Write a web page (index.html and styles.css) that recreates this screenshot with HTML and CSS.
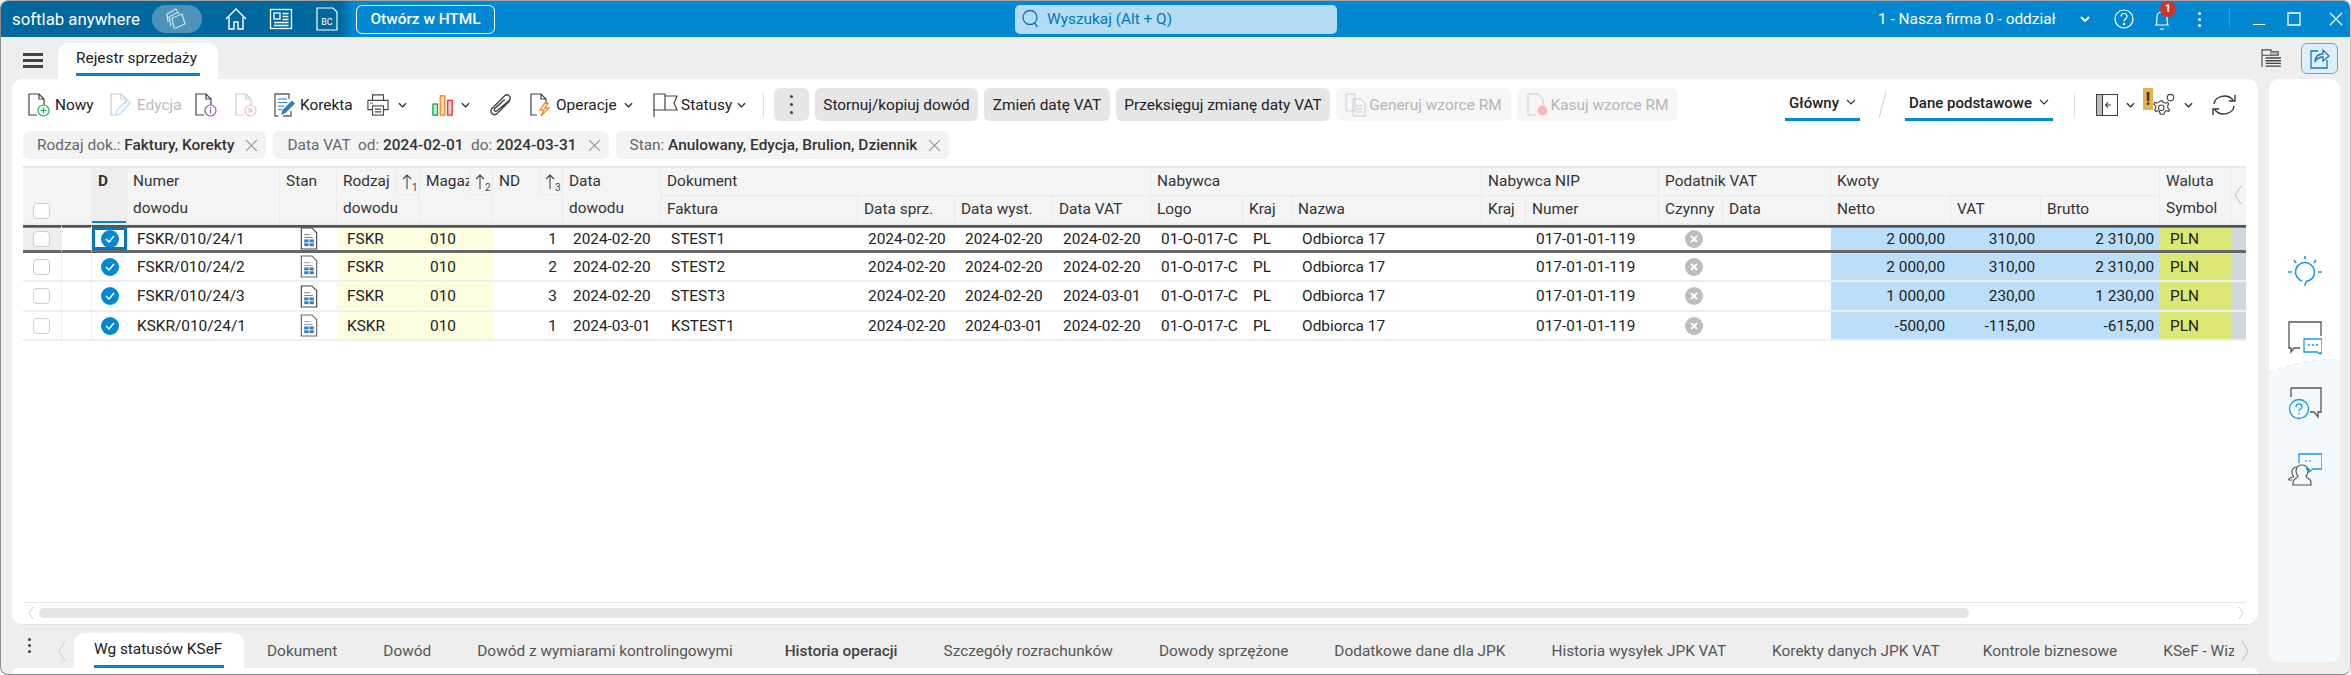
FILE: index.html
```html
<!DOCTYPE html>
<html lang="pl">
<head>
<meta charset="utf-8">
<title>softlab anywhere</title>
<link rel="stylesheet" href="styles.css">
</head>
<body>
<div class="app">
  <header class="titlebar">
    <div class="brand">
      <span class="brand-name">softlab anywhere</span>
      <span class="brand-pill"><svg class="ic24" viewBox="0 0 24 24" fill="none" stroke="#cfe6f3" stroke-width="1.2"><path d="M3 15l-1-8 9-5 1 2"/><path d="M6 19l-2-9 9-5 1 2"/><path d="M9 21l-2-10 10-4 3 10-9 4z"/></svg></span>
      <svg class="ic24 nav-home" viewBox="0 0 24 24" fill="none" stroke="#fff" stroke-width="1.4"><path d="M2 12L12 2l10 10M5 10v12h5v-7h4v7h5V10"/></svg>
      <svg class="ic24 nav-news" viewBox="0 0 24 24" fill="none" stroke="#fff" stroke-width="1.3"><rect x="1.5" y="2.5" width="21" height="19"/><rect x="5" y="6" width="6" height="6"/><path d="M13.500 6.500h6M13.500 9.500h6M13.500 12.500h6M5 15.500h14.500M5 18.500h14.500"/></svg>
      <svg class="ic24 nav-bc" viewBox="0 0 24 24" fill="none" stroke="#fff" stroke-width="1.2"><path d="M2 1h16l4 4v18H2z"/><text x="12" y="18" class="bc-text">BC</text></svg>
    </div>
    <button class="html-btn">Otwórz w HTML</button>
    <div class="search">
      <svg class="ic20" viewBox="0 0 20 20" fill="none" stroke="#0277bd" stroke-width="1.3"><circle cx="9" cy="8.500" r="7"/><path d="M13.500 14l3 4"/></svg>
      <span>Wyszukaj (Alt + Q)</span>
    </div>
    <div class="title-right">
      <span class="firm">1 - Nasza firma 0 - oddział</span>
      <svg class="chev-w" viewBox="0 0 10 6" fill="none" stroke="#fff" stroke-width="2"><path d="M1 1l4 4 4-4"/></svg>
      <svg class="ic20 t-help" viewBox="0 0 20 20" fill="none" stroke="#fff" stroke-width="1.2"><circle cx="10" cy="10" r="9"/><path d="M7 7.500C7 3.500 13 3.500 13 7.500c0 2.500-3 2.500-3 5"/><circle cx="10" cy="15" r=".6"/></svg>
      <span class="bell">
        <svg class="ic24" viewBox="0 0 24 24" fill="none" stroke="#fff" stroke-width="1.2"><path d="M6 18c1-2 1-5 1-8 0-3 2-5 5-5s5 2 5 5c0 3 0 6 1 8zM10 22h4"/></svg>
        <span class="badge">1</span>
      </span>
      <span class="vdots vdots-w"><i></i><i></i><i></i></span>
      <span class="tsep"></span>
      <svg class="win win-min" viewBox="0 0 14 14" stroke="#fff" stroke-width="1.200"><path d="M1 12.500h12"/></svg>
      <svg class="win win-max" viewBox="0 0 14 14" fill="none" stroke="#fff" stroke-width="1.300"><path d="M1 1h12v12H1z"/></svg>
      <svg class="win win-close" viewBox="0 0 14 14" stroke="#fff" stroke-width="1.200"><path d="M1 1l12 12M13 1L1 13"/></svg>
    </div>
  </header>

  <div class="workspace">
    <div class="left">
      <div class="tabstrip">
        <span class="burger"><i></i><i></i><i></i></span>
        <div class="tab"><span class="tab-label">Rejestr sprzedaży</span></div>
      </div>

      <section class="card">
        <div class="toolbar">
          <div class="tool w-nowy"><svg class="doc" viewBox="0 0 22 24" fill="none"><path d="M9 22H1V1h10l5 5v6M11 1v5h5" stroke="#444" stroke-width="1.200"/><circle cx="15.500" cy="17.500" r="5.500" stroke="#1eaa55" stroke-width="1.200"/><path d="M15.500 14.500v6M12.500 17.500h6" stroke="#1eaa55" stroke-width="1.200"/></svg><span>Nowy</span></div>
          <div class="tool off w-edycja"><svg class="doc" viewBox="0 0 22 24" fill="none"><path d="M5 22H1V1h10l5 5v5M11 1v5h5" stroke="#ccc" stroke-width="1.200"/><path d="M6 22l1-5 10-10 3 3L10 21z" stroke="#b3daf2" stroke-width="1.200"/></svg><span>Edycja</span></div>
          <div class="tool w-info"><svg class="doc" viewBox="0 0 22 24" fill="none"><path d="M9 22H1V1h10l5 5v6M11 1v5h5" stroke="#444" stroke-width="1.200"/><circle cx="15.500" cy="17.500" r="5.500" stroke="#9c4fb0" stroke-width="1.200"/><path d="M15.500 16.500v4M15.500 14v1.500" stroke="#9c4fb0" stroke-width="1.200"/></svg></div>
          <div class="tool w-cancel"><svg class="doc" viewBox="0 0 22 24" fill="none"><path d="M9 22H1V1h10l5 5v6M11 1v5h5" stroke="#ccc" stroke-width="1.200"/><circle cx="15.500" cy="17.500" r="5.500" stroke="#f6b9b9" stroke-width="1.200"/><path d="M13.500 15.500l4 4M17.500 15.500l-4 4" stroke="#f6b9b9" stroke-width="1.200"/></svg></div>
          <div class="tool w-korekta"><svg class="doc" viewBox="0 0 22 24" fill="none"><path d="M4 23H1V1h14v5M17 18v5H9" stroke="#666" stroke-width="1.400"/><path d="M4 6h9M4 9.500h9M4 13h6M4 16.500h4" stroke="#2f7fc6" stroke-width="1.200"/><path d="M7 22l1.500-5L18 7.500l3 3L11.500 20z" fill="#2f7fc6"/></svg><span>Korekta</span></div>
          <div class="tool w-print"><svg class="doc" viewBox="0 0 24 24" fill="none" stroke="#444" stroke-width="1.200"><path d="M6 7V1h12v6M6 17H1V7h22v10h-5"/><rect x="6" y="13" width="12" height="10"/><path d="M8.500 16.500h7M8.500 19.500h7"/><path d="M3.500 10h3" stroke="#29a"/></svg><svg class="chev" viewBox="0 0 10 6" fill="none"><path d="M1 1l4 4 4-4"/></svg></div>
          <div class="tool w-chart"><svg class="doc" viewBox="0 0 24 24" fill="none" stroke-width="1.500"><rect x="1" y="11" width="5" height="12" stroke="#1eaa55" fill="#bfe8cf"/><rect x="9" y="2" width="5" height="21" stroke="#ef8a2d" fill="#fbd9b8"/><rect x="17" y="7" width="5" height="16" stroke="#e33c3c" fill="#f9c9c9"/></svg><svg class="chev" viewBox="0 0 10 6" fill="none"><path d="M1 1l4 4 4-4"/></svg></div>
          <div class="tool w-clip"><svg class="doc" viewBox="0 0 24 24" fill="none" stroke="#444" stroke-width="1.500"><path d="M22 7L7 22c-3 2-8-2-5-6L16 2c3-3 8 1 5 5L8 18c-2 2-4 0-3-2L16 6"/></svg></div>
          <div class="tool w-oper"><svg class="doc" viewBox="0 0 22 24" fill="none"><path d="M7 22H1V1h10l5 5v5M11 1v5h5" stroke="#444" stroke-width="1.200"/><path d="M15 10l-5 7h4l-3 6 8-8h-4l3-5z" stroke="#ef8a2d" stroke-width="1.300"/></svg><span>Operacje</span><svg class="chev" viewBox="0 0 10 6" fill="none"><path d="M1 1l4 4 4-4"/></svg></div>
          <div class="tool w-stat"><svg class="doc flag" viewBox="0 0 26 24" fill="none" stroke="#444" stroke-width="1.200"><path d="M1 24V1h11v16H1M12 3h12l-3 7 3 7H12"/></svg><span>Statusy</span><svg class="chev" viewBox="0 0 10 6" fill="none"><path d="M1 1l4 4 4-4"/></svg></div>
          <span class="bar-sep"></span>
          <button class="act act-dots"><span class="vdots"><i></i><i></i><i></i></span></button>
          <button class="act act-a">Stornuj/kopiuj dowód</button>
          <button class="act act-b">Zmień datę VAT</button>
          <button class="act act-c">Przeksięguj zmianę daty VAT</button>
          <button class="act dis act-d"><svg class="doc" viewBox="0 0 22 24" fill="none" stroke="#d0d0d0"><path d="M1 1h9v17H1z"/><path d="M8 6h8l4 4v13H8z" stroke="#bcd"/><path d="M11 13h6M11 16h6M11 19h6" stroke="#bcd"/></svg>Generuj wzorce RM</button>
          <button class="act dis act-e"><svg class="doc" viewBox="0 0 22 24" fill="none"><path d="M9 22H1V1h10l5 5v6" stroke="#ccc"/><circle cx="15.500" cy="17.500" r="5" fill="#f6b9b9"/></svg>Kasuj wzorce RM</button>
          <div class="bar-right">
            <span class="view view-a">Główny<svg class="chev-thin" viewBox="0 0 10 6" fill="none"><path d="M1 1l4 4 4-4"/></svg></span>
            <span class="slash"></span>
            <span class="view view-b">Dane podstawowe<svg class="chev-thin" viewBox="0 0 10 6" fill="none"><path d="M1 1l4 4 4-4"/></svg></span>
            <span class="bar-sep sep-r"></span>
            <svg class="panel-ic" viewBox="0 0 22 22" fill="none" stroke="#444" stroke-width="1.100"><rect x=".5" y=".5" width="21" height="21"/><rect x=".5" y=".5" width="6" height="21" fill="#bdbdbd"/><path d="M15 11h-5M12 8.500L9.500 11l2.500 2.500"/></svg>
            <svg class="chev chev-p" viewBox="0 0 10 6" fill="none"><path d="M1 1l4 4 4-4"/></svg>
            <span class="warn"><b>!</b></span>
            <svg class="gear" viewBox="0 0 26 28" fill="none" stroke="#444" stroke-width="1.200"><path d="M9 10l2-1 1 2 3 1 2-1 1 2-1 2v2l2 2-1 2-2-1-2 1-1 3H9l-1-3-2-1-2 1-1-2 1-2v-2l-2-2 1-2 2 1z"/><circle cx="10" cy="17" r="3"/><circle cx="20" cy="6" r="3.500"/></svg>
            <svg class="chev chev-g" viewBox="0 0 10 6" fill="none"><path d="M1 1l4 4 4-4"/></svg>
            <svg class="refresh" viewBox="0 0 24 24" fill="none" stroke="#333" stroke-width="1.400"><path d="M2 11C3 3 15 0 21 7M23 2v6h-6M22 13c-1 8-13 11-19 4M1 22v-6h6"/></svg>
          </div>
        </div>

        <div class="chips">
          <div class="chip"><span class="chip-t"><span class="lbl">Rodzaj dok.: </span><b>Faktury, Korekty</b></span><svg class="x" viewBox="0 0 12 12" stroke="#999" stroke-width="1.100"><path d="M1 1l10 10M11 1L1 11"/></svg></div>
          <div class="chip"><span class="chip-t"><span class="lbl">Data VAT  od: </span><b>2024-02-01</b><span class="lbl">  do: </span><b>2024-03-31</b></span><svg class="x" viewBox="0 0 12 12" stroke="#999" stroke-width="1.100"><path d="M1 1l10 10M11 1L1 11"/></svg></div>
          <div class="chip"><span class="chip-t"><span class="lbl">Stan: </span><b>Anulowany, Edycja, Brulion, Dziennik</b></span><svg class="x" viewBox="0 0 12 12" stroke="#999" stroke-width="1.100"><path d="M1 1l10 10M11 1L1 11"/></svg></div>
        </div>

        <div class="gridwrap">
          <table class="grid">
            <colgroup>
              <col class="c38"><col class="c31"><col class="c35"><col class="c153"><col class="c57"><col class="c83"><col class="c73"><col class="c70"><col class="c98"><col class="c197"><col class="c97"><col class="c98"><col class="c98"><col class="c92"><col class="c49"><col class="c190"><col class="c44"><col class="c133"><col class="c64"><col class="c108"><col class="c120"><col class="c90"><col class="c119"><col class="c71"><col class="c15">
            </colgroup>
            <thead>
              <tr>
                <th colspan="2" rowspan="2" class="th-check"><span class="cb"></span></th>
                <th rowspan="2" class="th-d">D</th>
                <th rowspan="2">Numer<br>dowodu</th>
                <th rowspan="2">Stan</th>
                <th rowspan="2">Rodzaj<br>dowodu<span class="sort"><svg viewBox="0 0 10 15" fill="none" stroke="#444" stroke-width="1.100"><path d="M5 15V1M1 5l4-4 4 4"/></svg><sub>1</sub></span></th>
                <th rowspan="2">Magaz<span class="sort"><svg viewBox="0 0 10 15" fill="none" stroke="#444" stroke-width="1.100"><path d="M5 15V1M1 5l4-4 4 4"/></svg><sub>2</sub></span></th>
                <th rowspan="2">ND<span class="sort"><svg viewBox="0 0 10 15" fill="none" stroke="#444" stroke-width="1.100"><path d="M5 15V1M1 5l4-4 4 4"/></svg><sub>3</sub></span></th>
                <th rowspan="2">Data<br>dowodu</th>
                <th colspan="4" class="th-g">Dokument</th>
                <th colspan="3" class="th-g">Nabywca</th>
                <th colspan="2" class="th-g">Nabywca NIP</th>
                <th colspan="2" class="th-g">Podatnik VAT</th>
                <th colspan="3" class="th-g">Kwoty</th>
                <th rowspan="2">Waluta<br>Symbol</th>
                <th rowspan="2" class="th-end"><svg class="chev-left" viewBox="0 0 8 20" fill="none" stroke="#bbb"><path d="M7 1L1 10l6 9"/></svg></th>
              </tr>
              <tr>
                <th>Faktura</th><th>Data sprz.</th><th>Data wyst.</th><th>Data VAT</th>
                <th>Logo</th><th>Kraj</th><th>Nazwa</th>
                <th>Kraj</th><th>Numer</th>
                <th>Czynny</th><th>Data</th>
                <th>Netto</th><th>VAT</th><th>Brutto</th>
              </tr>
            </thead>
            <tbody>
              <tr class="sel">
                <td class="td-sel"><span class="cb"></span></td><td class="td-v"></td>
                <td class="td-d focus"><span class="ok"><svg viewBox="0 0 10 8" fill="none" stroke="#fff" stroke-width="1.500"><path d="M1 4l3 3 5-6"/></svg></span></td>
                <td>FSKR/010/24/1</td>
                <td class="td-i"><svg class="st" viewBox="0 0 18 24" fill="none"><path d="M1 1h11l5 5v17H1z" stroke="#444" stroke-width="1.200"/><path d="M4 8h6M4 11h9" stroke="#777"/><rect x="4" y="13" width="10" height="7" fill="#2f7fc6"/><path d="M4 16.500h10M9 13v7" stroke="#fff"/></svg></td>
                <td class="yl">FSKR</td><td class="yl">010</td><td class="num">1</td><td>2024-02-20</td>
                <td>STEST1</td><td>2024-02-20</td><td>2024-02-20</td><td>2024-02-20</td>
                <td>01-O-017-C</td><td>PL</td><td>Odbiorca 17</td><td></td><td>017-01-01-119</td>
                <td class="td-c"><span class="no"><svg viewBox="0 0 8 8" stroke="#fff" stroke-width="1.800"><path d="M1 1l6 6M7 1L1 7"/></svg></span></td><td></td>
                <td class="bl num">2 000,00</td><td class="bl num">310,00</td><td class="bl num">2 310,00</td><td class="lm">PLN</td><td class="gy"></td>
              </tr>
              <tr>
                <td><span class="cb"></span></td><td class="td-v"></td>
                <td class="td-d"><span class="ok"><svg viewBox="0 0 10 8" fill="none" stroke="#fff" stroke-width="1.500"><path d="M1 4l3 3 5-6"/></svg></span></td>
                <td>FSKR/010/24/2</td>
                <td class="td-i"><svg class="st" viewBox="0 0 18 24" fill="none"><path d="M1 1h11l5 5v17H1z" stroke="#666" stroke-width="1.200"/><path d="M4 8h6M4 11h9" stroke="#999"/><rect x="4" y="13" width="10" height="7" fill="#2f7fc6"/><path d="M4 16.500h10M9 13v7" stroke="#fff"/></svg></td>
                <td class="yl">FSKR</td><td class="yl">010</td><td class="num">2</td><td>2024-02-20</td>
                <td>STEST2</td><td>2024-02-20</td><td>2024-02-20</td><td>2024-02-20</td>
                <td>01-O-017-C</td><td>PL</td><td>Odbiorca 17</td><td></td><td>017-01-01-119</td>
                <td class="td-c"><span class="no"><svg viewBox="0 0 8 8" stroke="#fff" stroke-width="1.800"><path d="M1 1l6 6M7 1L1 7"/></svg></span></td><td></td>
                <td class="bl num">2 000,00</td><td class="bl num">310,00</td><td class="bl num">2 310,00</td><td class="lm">PLN</td><td class="gy"></td>
              </tr>
              <tr class="tall">
                <td><span class="cb"></span></td><td class="td-v"></td>
                <td class="td-d"><span class="ok"><svg viewBox="0 0 10 8" fill="none" stroke="#fff" stroke-width="1.500"><path d="M1 4l3 3 5-6"/></svg></span></td>
                <td>FSKR/010/24/3</td>
                <td class="td-i"><svg class="st" viewBox="0 0 18 24" fill="none"><path d="M1 1h11l5 5v17H1z" stroke="#444" stroke-width="1.200"/><path d="M4 8h6M4 11h9" stroke="#777"/><rect x="4" y="13" width="10" height="7" fill="#2f7fc6"/><path d="M4 16.500h10M9 13v7" stroke="#fff"/></svg></td>
                <td class="yl">FSKR</td><td class="yl">010</td><td class="num">3</td><td>2024-02-20</td>
                <td>STEST3</td><td>2024-02-20</td><td>2024-02-20</td><td>2024-03-01</td>
                <td>01-O-017-C</td><td>PL</td><td>Odbiorca 17</td><td></td><td>017-01-01-119</td>
                <td class="td-c"><span class="no"><svg viewBox="0 0 8 8" stroke="#fff" stroke-width="1.800"><path d="M1 1l6 6M7 1L1 7"/></svg></span></td><td></td>
                <td class="bl num">1 000,00</td><td class="bl num">230,00</td><td class="bl num">1 230,00</td><td class="lm">PLN</td><td class="gy"></td>
              </tr>
              <tr>
                <td><span class="cb"></span></td><td class="td-v"></td>
                <td class="td-d"><span class="ok"><svg viewBox="0 0 10 8" fill="none" stroke="#fff" stroke-width="1.500"><path d="M1 4l3 3 5-6"/></svg></span></td>
                <td>KSKR/010/24/1</td>
                <td class="td-i"><svg class="st" viewBox="0 0 18 24" fill="none"><path d="M1 1h11l5 5v17H1z" stroke="#666" stroke-width="1.200"/><path d="M4 8h6M4 11h9" stroke="#999"/><rect x="4" y="13" width="10" height="7" fill="#2f7fc6"/><path d="M4 16.500h10M9 13v7" stroke="#fff"/></svg></td>
                <td class="yl">KSKR</td><td class="yl">010</td><td class="num">1</td><td>2024-03-01</td>
                <td>KSTEST1</td><td>2024-02-20</td><td>2024-03-01</td><td>2024-02-20</td>
                <td>01-O-017-C</td><td>PL</td><td>Odbiorca 17</td><td></td><td>017-01-01-119</td>
                <td class="td-c"><span class="no"><svg viewBox="0 0 8 8" stroke="#fff" stroke-width="1.800"><path d="M1 1l6 6M7 1L1 7"/></svg></span></td><td></td>
                <td class="bl num">-500,00</td><td class="bl num">-115,00</td><td class="bl num">-615,00</td><td class="lm">PLN</td><td class="gy"></td>
              </tr>
            </tbody>
          </table>
        </div>

        <div class="hscroll">
          <svg class="sc-ch" viewBox="0 0 6 14" fill="none" stroke="#ccc"><path d="M5 1L1 7l4 6"/></svg>
          <span class="thumb"></span>
          <svg class="sc-ch sc-r" viewBox="0 0 6 14" fill="none" stroke="#ccc"><path d="M1 1l4 6-4 6"/></svg>
        </div>
      </section>

      <nav class="bottomtabs">
        <span class="vdots vdots-b"><i></i><i></i><i></i></span>
        <svg class="bt-ch" viewBox="0 0 8 22" fill="none" stroke="#ccc"><path d="M7 1L1 11l6 10"/></svg>
        <div class="btab active"><span>Wg statusów KSeF</span></div>
        <div class="btab">Dokument</div>
        <div class="btab">Dowód</div>
        <div class="btab">Dowód z wymiarami kontrolingowymi</div>
        <div class="btab strong">Historia operacji</div>
        <div class="btab">Szczegóły rozrachunków</div>
        <div class="btab">Dowody sprzężone</div>
        <div class="btab">Dodatkowe dane dla JPK</div>
        <div class="btab">Historia wysyłek JPK VAT</div>
        <div class="btab btab-tight">Korekty danych JPK VAT</div>
        <div class="btab">Kontrole biznesowe</div>
        <div class="btab btab-cut">KSeF - Wiz</div>
        <svg class="bt-ch bt-r" viewBox="0 0 8 22" fill="none" stroke="#bbb"><path d="M1 1l6 10-6 10"/></svg>
      </nav>
      <div class="stub"></div>
    </div>

    <aside class="side">
      <div class="side-top">
        <svg class="listic" viewBox="0 0 22 20" fill="none" stroke="#444" stroke-width="1.200"><path d="M1 20V1h10v6H1"/><path d="M11 3h8v4h-8" fill="#bbb"/><path d="M5 10h17M5 13h17M5 16h17M5 19h17" stroke-width="1.500"/></svg>
        <span class="share"><svg viewBox="0 0 20 22" fill="none" stroke="#1976b8" stroke-width="1.300"><path d="M8 4H1v17h16v-8"/><path d="M5 15c0-6 4-8 8-8V3l6 6-6 5v-4c-4 0-6 1-8 5z"/></svg></span>
      </div>
      <div class="panel">
        <svg class="panel-bg" viewBox="0 0 71 303" preserveAspectRatio="none"><path d="M0 40L71 110V303H0z" fill="#f0f7fc"/><path d="M0 14C20 4 50 0 71 0V303H0z" fill="#f3f9fd"/><path d="M0 14C20 4 50 0 71 0" fill="none" stroke="#d5e9f6" stroke-dasharray="5 4"/></svg>
        <svg class="pi pi-bulb" viewBox="0 0 34 34" fill="none" stroke="#1a9ae0" stroke-width="1.600"><circle cx="17" cy="17" r="9.500" stroke-dasharray="55 5" transform="rotate(107 17 17)"/><path d="M19 26c-1 1-2.500 2-2 5M17 1v3M6 5l2 3M28 5l-2 3M0 17h4M30 17h4"/></svg>
        <svg class="pi pi-chat" viewBox="0 0 34 34" fill="none"><path d="M12 27H6l-3 4v-4H1V1h32v14" stroke="#555" stroke-width="1.300"/><path d="M16 18h18v14h-2v1l-3-2H16z" stroke="#1a9ae0" fill="#fff" stroke-width="1.300"/><path d="M20 24h10" stroke="#1a9ae0" stroke-dasharray="2 2" stroke-width="1.300"/></svg>
        <svg class="pi pi-q" viewBox="0 0 34 34" fill="none"><path d="M3 1h30v24h-3v5l-4-5h-4M3 1v9" stroke="#555" stroke-width="1.300"/><circle cx="11" cy="22" r="9.500" stroke="#1a9ae0" fill="#f3f9fd" stroke-width="1.300"/><path d="M8 20c0-4 6-4 6 0 0 2-3 2-3 4M11 26v1.500" stroke="#1a9ae0" stroke-width="1.300"/></svg>
        <svg class="pi pi-people" viewBox="0 0 34 34" fill="none"><path d="M11 10V1h23v15h-9l-4 3v-3h-3" stroke="#1a9ae0" stroke-width="1.300"/><path d="M17 8h8" stroke="#1a9ae0" stroke-dasharray="2 2"/><path d="M5 32v-3c0-3 5-4 5-6-3-3-3-11 4-11s7 8 4 11c0 2 5 3 5 6v3zM6 24c-4 0-6 2-5 3l3 0M6 24c-3-3-3-10 3-10" stroke="#555" stroke-width="1.200"/></svg>
      </div>
    </aside>
  </div>
</div>
</body>
</html>
```
FILE: styles.css
```css
* { box-sizing: border-box; }
html, body { margin: 0; height: 100%; overflow: hidden; background: #fff; }
body { font-family: Roboto, "Noto Sans", sans-serif; font-size: 15.400px; color: #222; }
button { font: inherit; color: inherit; border: 0; }
svg { display: block; flex: none; }

.app { width: 2351px; height: 675px; display: flex; flex-direction: column; background: #eee; border: 1px solid #8c8c8c; border-top-color: #a5a5a5; border-right-color: #c4c4c4; border-radius: 8px; overflow: hidden; }

/* title bar */
.titlebar { height: 36px; flex: none; display: flex; align-items: center; color: #fff; background: linear-gradient(90deg, #01689e 0, #01689e 340px, #0288d3 352px); position: relative; }
.brand { display: flex; align-items: center; width: 355px; flex: none; padding-left: 11px; }
.brand-name { font-size: 16.800px; width: 140px; flex: none; white-space: nowrap; }
.brand-pill { width: 50px; height: 28px; border-radius: 14px; background: #4c93ba; display: flex; align-items: center; justify-content: center; }
.ic24 { width: 24px; height: 24px; }
.ic20 { width: 20px; height: 20px; }
.nav-home { margin-left: 22px; }
.nav-news { margin-left: 21px; }
.nav-bc { margin-left: 22px; }
.bc-text { font: 9px Roboto, sans-serif; fill: #fff; stroke: none; text-anchor: middle; }
.html-btn { width: 139px; height: 29px; background: transparent; border: 1px solid #fff; border-radius: 6px; color: #fff; font-weight: 500; padding: 0; flex: none; white-space: nowrap; }
.search { width: 322px; height: 29px; margin-left: 520px; flex: none; background: #b3dcf2; border-radius: 5px; display: flex; align-items: center; gap: 6px; padding-left: 6px; color: #0277bd; }
.title-right { flex: 1; display: flex; align-items: center; position: relative; height: 100%; padding-left: 541px; }
.firm { width: 200px; flex: none; white-space: nowrap; }
.chev-w { width: 10px; height: 6px; margin-left: 2px; }
.t-help { margin-left: 24px; }
.bell { position: relative; width: 24px; height: 24px; margin-left: 16px; }
.badge { position: absolute; left: 10px; top: -6px; width: 16px; height: 16px; border-radius: 50%; background: #d32f2f; color: #fff; font-size: 11px; font-weight: 700; text-align: center; line-height: 16px; }
.vdots { display: inline-flex; flex-direction: column; gap: 3px; align-items: center; }
.vdots i { width: 3px; height: 3px; border-radius: 50%; background: #444; display: block; }
.vdots-w { margin-left: 24px; }
.vdots-w i { background: #fff; }
.tsep { width: 1px; height: 20px; background: #2d9fdc; margin-left: 28px; }
.win { width: 14px; height: 14px; }
.win-min { margin-left: 22px; }
.win-max { margin-left: 21px; }
.win-close { margin-left: 28px; }

/* workspace */
.workspace { flex: 1; display: flex; min-height: 0; padding-left: 11px; }
.left { width: 2246px; flex: none; display: flex; flex-direction: column; }
.tabstrip { height: 42px; flex: none; display: flex; align-items: flex-end; padding-left: 11px; }
.burger { display: flex; flex-direction: column; gap: 3px; width: 20px; margin-bottom: 11px; }
.burger i { height: 3px; background: #444; display: block; }
.tab { margin-left: 15px; width: 160px; height: 36px; background: #fff; border-radius: 10px 10px 0 0; padding: 0 18px; position: relative; display: flex; align-items: center; }
.tab-label { height: 31px; line-height: 26px; border-bottom: 3px solid #0288d3; white-space: nowrap; width: 125px; margin-top: -2px; }

.card { height: 546px; flex: none; background: #fff; border-radius: 10px; display: flex; flex-direction: column; padding: 0 12px 0 11px; border-bottom: 1px solid #e2e2e2; }

/* toolbar */
.toolbar { height: 33px; margin-top: 9px; flex: none; display: flex; align-items: center; padding-left: 5px; }
.tool { display: flex; align-items: center; flex: none; gap: 5px; height: 100%; white-space: nowrap; }
.tool.off { color: #bbb; }
.doc { width: 22px; height: 24px; }
.flag { width: 26px; }
.w-nowy { width: 82px; }
.w-edycja { width: 85px; }
.w-info { width: 40px; }
.w-cancel { width: 39px; }
.w-korekta { width: 93px; gap: 4px; }
.w-print { width: 65px; gap: 9px; }
.w-chart { width: 58px; gap: 7px; }
.w-clip { width: 40px; }
.w-oper { width: 123px; gap: 4px; }
.w-stat { width: 110px; gap: 2px; }
.chev { width: 9px; height: 6px; stroke: #333; stroke-width: 1.400; }
.w-oper .chev, .w-stat .chev { margin-left: 3px; }
.chev-thin { width: 10px; height: 6px; stroke: #333; stroke-width: 1.100; margin-left: 7px; margin-top: -3px; }
.bar-sep { width: 1px; height: 24px; background: #ddd; flex: none; }
.act { height: 33px; background: #e6e6e6; border-radius: 6px; padding: 0; margin-left: 6px; flex: none; white-space: nowrap; display: flex; align-items: center; justify-content: center; color: #222; }
.act-dots { width: 35px; margin-left: 10px; }
.act-dots .vdots { gap: 5px; }
.act-a { width: 163px; }
.act-b { width: 126px; }
.act-c { width: 214px; }
.act-d { width: 175px; }
.act-e { width: 161px; }
.act.dis { background: #f6f6f6; color: #b5b5b5; gap: 2px; }
.bar-right { margin-left: auto; display: flex; align-items: center; height: 100%; padding-right: 10px; }
.view { height: 33px; line-height: 28px; font-weight: 500; font-size: 15px; border-bottom: 3px solid #0288d3; padding: 0 4px; white-space: nowrap; display: flex; align-items: center; }
.slash { width: 1px; height: 26px; background: #ccc; transform: rotate(15deg); margin: 0 22px; }
.sep-r { margin-left: 21px; }
.panel-ic { width: 22px; height: 22px; margin-left: 21px; }
.chev-p { margin-left: 8px; }
.warn { width: 10px; height: 22px; margin-left: 8px; background: #e2b34e; color: #333; font-size: 18px; line-height: 22px; text-align: center; margin-top: -12px; position: relative; z-index: 1; }
.warn b { font-weight: 700; }
.gear { width: 24px; height: 26px; margin-left: -1px; }
.chev-g { margin-left: 8px; }
.refresh { width: 24px; height: 24px; margin-left: 19px; }

/* chips */
.chips { display: flex; gap: 7px; margin-top: 10px; height: 28px; flex: none; }
.chip { height: 28px; background: #f3f3f3; border-radius: 6px; display: flex; align-items: center; padding: 0 8px 0 14px; white-space: pre; color: #333; }
.chip .lbl { font-weight: 400; color: #666; }
.chip b { font-weight: 500; }
.x { width: 13px; height: 13px; margin-left: 11px; }

/* grid */
.gridwrap { flex: 1; margin-top: 7px; border-top: 2px solid #e8e8e8; border-bottom: 1px solid #e4e4e4; min-height: 0; }
.grid { width: 2223px; table-layout: fixed; border-collapse: separate; border-spacing: 0; }
.c38 { width: 38px; } .c31 { width: 31px; } .c35 { width: 35px; } .c153 { width: 153px; } .c57 { width: 57px; } .c83 { width: 83px; } .c73 { width: 73px; } .c70 { width: 70px; } .c98 { width: 98px; } .c197 { width: 197px; } .c97 { width: 97px; } .c92 { width: 92px; } .c49 { width: 49px; } .c190 { width: 190px; } .c44 { width: 44px; } .c133 { width: 133px; } .c64 { width: 64px; } .c108 { width: 108px; } .c120 { width: 120px; } .c90 { width: 90px; } .c119 { width: 119px; } .c71 { width: 71px; } .c15 { width: 15px; }
.grid th { height: 27px; padding: 0 6px; text-align: left; font-weight: 400; font-size: 15.400px; line-height: 27px; background: #f4f4f4; border-right: 1px solid #e9e9e9; color: #333; white-space: nowrap; overflow: hidden; vertical-align: top; position: relative; }
.grid thead tr:last-child th { height: 29px; border-bottom: 2px solid #eee; }
.grid th[rowspan] { border-bottom: 2px solid #eee; }
.grid .th-g { border-bottom: 1px solid #e9e9e9; }
.grid .th-check { vertical-align: bottom; padding: 0 0 4px 10px; }
.grid .th-d { background: #eee; font-weight: 700; box-shadow: inset 0 -2px 0 #0288d3; }
.grid .th-end { padding: 0; border-right: 0; }
.chev-left { width: 8px; height: 20px; position: absolute; left: 3px; top: 17px; }
.sort { position: absolute; right: 0; top: 0; width: 23px; height: 27px; background: #f4f4f4; border-left: 1px solid #ececec; border-bottom: 1px solid #ececec; display: flex; padding: 6px 0 0 5px; color: #444; }
.sort svg { width: 10px; height: 15px; }
.sort sub { font-size: 10px; line-height: 10px; margin-top: 9px; display: block; vertical-align: baseline; }
.grid td { height: 29px; padding: 0 6px 0 10px; font-size: 15.400px; white-space: nowrap; overflow: hidden; border-bottom: 2px solid #efefef; color: #222; }
.grid .tall td { height: 30px; }
.grid td.num { text-align: right; }
.td-v { border-left: 1px solid #eee; border-right: 1px solid #eee; }
.grid td.td-d { padding: 0; }
.grid td.td-i { padding: 0 0 0 20px; }
.grid td.td-c { padding: 0 0 0 26px; }
.yl { background: #fdfde0; }
.bl { background: #bbdefb; }
.lm { background: #dce775; }
.gy { background: #cfd8dc; }
.grid .sel td { height: 28px; border-top: 2px solid #555; border-bottom: 3px solid #666; box-shadow: inset 0 1px 0 #4b8bad; }
.grid .sel .td-sel { background: #eee; }
.grid .sel td.focus { box-shadow: inset 0 0 0 3px #0277bd; }
.cb { display: block; width: 17px; height: 16px; border: 1px solid #ccc; border-radius: 4px; background: #fff; }
.ok { width: 18px; height: 18px; border-radius: 50%; background: #0288d3; display: flex; align-items: center; justify-content: center; margin: 0 auto; }
.ok svg { width: 10px; height: 8px; }
.no { width: 18px; height: 18px; border-radius: 50%; background: #bdbdbd; display: flex; align-items: center; justify-content: center; }
.no svg { width: 8px; height: 8px; }
.st { width: 18px; height: 23px; }

/* horizontal scroll */
.hscroll { height: 21px; flex: none; display: flex; align-items: center; padding-bottom: 1px; position: relative; }
.sc-ch { width: 6px; height: 14px; margin-left: 5px; }
.thumb { width: 1930px; height: 10px; background: #e4e4e4; border-radius: 5px; margin-left: 5px; }
.sc-r { margin-left: 269px; }

/* bottom tabs */
.bottomtabs { height: 43px; flex: none; display: flex; align-items: flex-end; color: #555; white-space: nowrap; padding-left: 16px; }
.vdots-b { margin-bottom: 15px; }
.bt-ch { width: 8px; height: 22px; margin-left: 27px; margin-bottom: 6px; }
.btab { height: 35px; display: flex; align-items: center; padding: 0 23px; }
.btab.active { background: #fff; border-radius: 10px 10px 0 0; color: #222; width: 170px; margin-left: 8px; padding: 0 20px; }
.btab.active span { height: 35px; line-height: 33px; border-bottom: 3px solid #0288d3; display: block; width: 131px; }
.btab.strong { font-weight: 500; color: #444; padding-left: 29px; }
.btab-tight { padding-right: 20px; }
.btab-cut { padding-right: 0; width: 94px; overflow: hidden; }
.bt-r { margin-left: 7px; }
.stub { height: 6px; flex: none; background: #fff; border-radius: 8px 8px 0 0; }

/* side */
.side { width: 81px; flex: none; display: flex; flex-direction: column; padding-left: 11px; }
.side-top { height: 42px; flex: none; display: flex; align-items: center; position: relative; }
.listic { width: 20px; height: 18px; margin-left: -8px; flex: none; }
.share { width: 37px; height: 31px; margin-left: 20px; border: 1px solid #5da9d6; border-radius: 6px; background: #deeffa; display: flex; align-items: center; justify-content: center; }
.share svg { width: 20px; height: 22px; }
.panel { width: 71px; height: 583px; flex: none; background: #fff; border-radius: 10px; position: relative; overflow: hidden; display: flex; flex-direction: column; align-items: center; padding-top: 176px; }
.panel-bg { position: absolute; left: 0; top: 280px; width: 71px; height: 303px; }
.pi { width: 34px; height: 34px; position: relative; flex: none; margin-bottom: 32px; }
```
